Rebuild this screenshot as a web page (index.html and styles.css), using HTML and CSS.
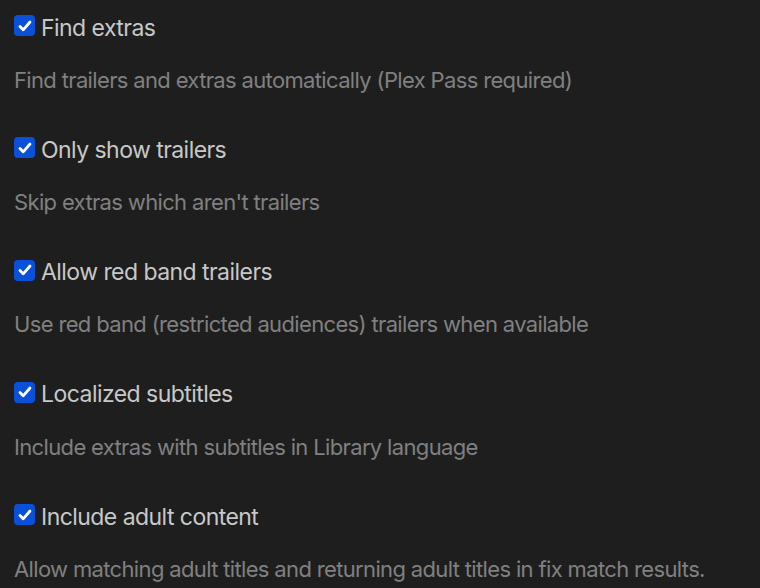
FILE: index.html
```html
<!DOCTYPE html>
<html>
<head>
<meta charset="utf-8">
<link rel="stylesheet" href="styles.css">
</head>
<body>
<div class="settings">
  <div class="setting">
    <label class="label"><span class="check"><svg viewBox="0 0 20 20"><path d="M5 10.5l3.2 3.3L15 6" /></svg></span>Find extras</label>
    <p class="desc">Find trailers and extras automatically (Plex Pass required)</p>
  </div>
  <div class="setting">
    <label class="label"><span class="check"><svg viewBox="0 0 20 20"><path d="M5 10.5l3.2 3.3L15 6" /></svg></span>Only show trailers</label>
    <p class="desc">Skip extras which aren't trailers</p>
  </div>
  <div class="setting">
    <label class="label"><span class="check"><svg viewBox="0 0 20 20"><path d="M5 10.5l3.2 3.3L15 6" /></svg></span>Allow red band trailers</label>
    <p class="desc">Use red band (restricted audiences) trailers when available</p>
  </div>
  <div class="setting">
    <label class="label"><span class="check"><svg viewBox="0 0 20 20"><path d="M5 10.5l3.2 3.3L15 6" /></svg></span>Localized subtitles</label>
    <p class="desc">Include extras with subtitles in Library language</p>
  </div>
  <div class="setting">
    <label class="label"><span class="check"><svg viewBox="0 0 20 20"><path d="M5 10.5l3.2 3.3L15 6" /></svg></span>Include adult content</label>
    <p class="desc">Allow matching adult titles and returning adult titles in fix match results.</p>
  </div>
</div>
</body>
</html>
```

FILE: styles.css
```css
html, body {
  margin: 0;
  background: #1e1e1e;
  height: 100%;
  overflow: hidden;
}
body {
  font-family: Inter, "Noto Sans", sans-serif;
}
.settings {
  display: flex;
  flex-direction: column;
  gap: 41.85px;
  padding: 13.6px 14px 0 14px;
}
.setting {
  display: flex;
  flex-direction: column;
}
.label {
  display: flex;
  align-items: center;
  gap: 6px;
  height: 28px;
  line-height: 28px;
  font-size: 23px;
  letter-spacing: -0.55px;
  color: #c8c8c8;
}
.check {
  flex-shrink: 0;
  width: 21px;
  height: 21px;
  border-radius: 4px;
  background: #0a50d8;
  display: flex;
  align-items: center;
  justify-content: center;
  margin-top: -4px;
}
.check svg {
  width: 20px;
  height: 20px;
  fill: none;
  stroke: #fff;
  stroke-width: 2.8;
  stroke-linecap: round;
  stroke-linejoin: round;
}
.desc {
  margin: 24.4px 0 0 0;
  font-size: 22px;
  line-height: 28px;
  letter-spacing: -0.65px;
  color: #808080;
  white-space: nowrap;
}
```
